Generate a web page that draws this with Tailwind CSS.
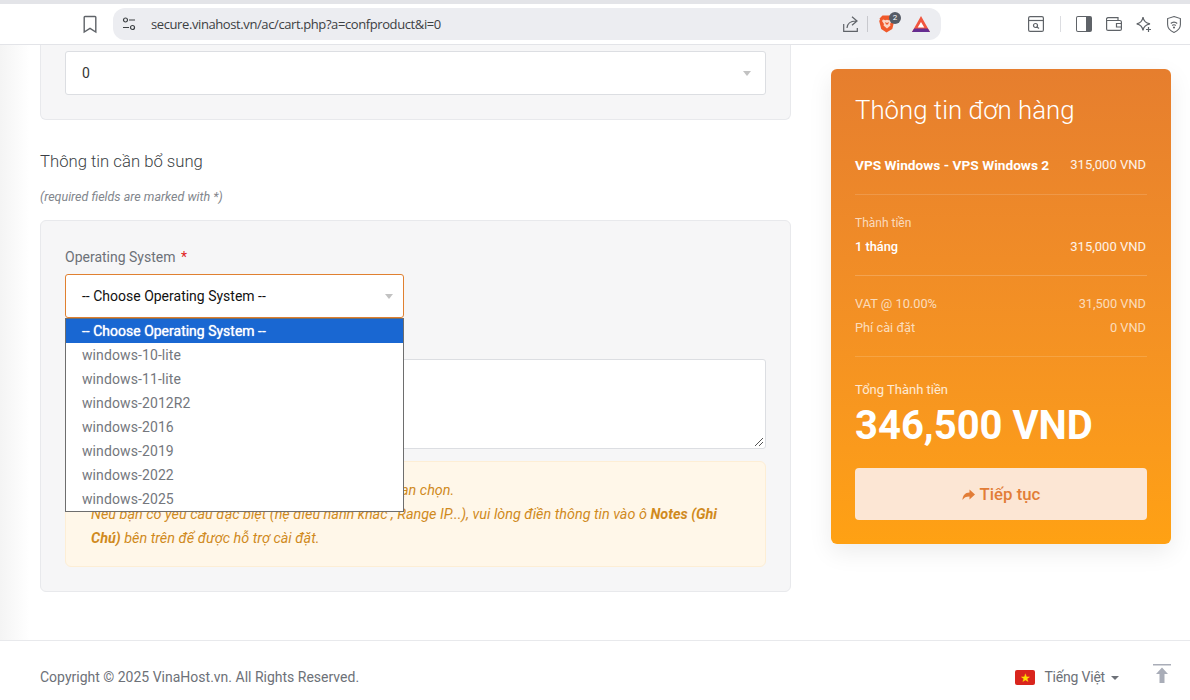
<!DOCTYPE html>
<html lang="en">

<head>
  <script src="https://cdn.jsdelivr.net/npm/@tailwindcss/browser@4"></script>
  <meta charset="UTF-8">
  <title>VinaHost cart</title>
</head>

<body class="h-[700px] w-[1190px] overflow-hidden bg-white font-['Roboto',sans-serif] text-[14px]">
  <!-- Browser toolbar -->
  <div class="h-[45px] border-t-4 border-b border-t-[#e3e4e8] border-b-[#e3e4e8] bg-white flex items-center">
    <svg class="ml-[82px] w-[16px] h-[20px] text-[#5f6368]" viewBox="0 0 16 20" fill="none" stroke="currentColor" stroke-width="1.4">
      <path d="M3 2.500h10a.8.8 0 0 1 .8.8V18l-5.800-3.600L2.200 18V3.300a.8.8 0 0 1 .8-.8z" />
    </svg>
    <div class="ml-[15px] w-[828px] h-[32px] rounded-[12px] bg-[#ecedf1] flex items-center">
      <svg class="ml-[9px] w-[14px] h-[14px] text-[#3c4043]" viewBox="0 0 14 14" fill="none" stroke="currentColor" stroke-width="1.2">
        <circle cx="3.500" cy="3" r="2" />
        <path d="M7 3h6M1 10.500h6" />
        <circle cx="10.500" cy="10.500" r="2" />
      </svg>
      <span class="ml-[15px] pt-[2px] text-[13px] text-[#3c4043] font-['Open_Sans',sans-serif] tracking-[-0.4px]">secure.vinahost.vn/ac/cart.php?a=confproduct&amp;i=0</span>
      <svg class="ml-auto w-[16px] h-[16px] text-[#5f6368]" viewBox="0 0 16 16" fill="none" stroke="currentColor" stroke-width="1.2">
        <path d="M.7 8v7.300h13.600V12M4 12c.4-4.500 3.500-7 8.800-7M9 .8l5 4.200-5 4.200" />
      </svg>
      <div class="ml-[8px] w-px h-[16px] bg-[#c8c9ce]"></div>
      <div class="relative ml-[11px] w-[16px] h-[18px]">
        <svg class="w-[16px] h-[18px]" viewBox="0 0 16 18">
          <path d="M3.500 .5h9l2.500 3-.5 1 .8 1.500-2 8-5.800 3.500L2.200 14l-2-8L1 4.500l-.5-1z" fill="#f0592a" />
          <path d="M4 4.500l2.500.8L8 4.800l1.500.5 2.500-.8 1 1.500-2 3 .5 1.500L8 13.500 4.500 10.500l.5-1.500-2-3z" fill="#fbd6c5" />
          <path d="M6 7l2 1 2-1-1 2.500H7z" fill="#f0592a" />
        </svg>
        <span class="absolute -top-[3px] left-[10px] w-[12px] h-[12px] rounded-full bg-[#555b66] text-white text-[8px] leading-[12px] text-center">2</span>
      </div>
      <svg class="ml-[17px] mr-[11px] w-[18px] h-[16px]" viewBox="0 0 18 16">
        <path d="M9 0l9 16H0z" fill="#f1563f" />
        <path d="M0 16l2.200-3.500h13.600L18 16z" fill="#662d91" />
        <path d="M9 6l3.300 5.500H5.700z" fill="#fff" />
      </svg>
    </div>
    <svg class="ml-[87px] w-[16px] h-[16px] text-[#5f6368]" viewBox="0 0 16 16" fill="none" stroke="currentColor" stroke-width="1.2">
      <rect x=".6" y=".6" width="14.800" height="14.800" rx="1.500" />
      <path d="M.6 4.500h14.800" />
      <circle cx="7.500" cy="9.500" r="2" />
      <path d="M9 11l2 1.500" />
    </svg>
    <div class="ml-[16px] w-px h-[16px] bg-[#dcdde1]"></div>
    <div class="ml-[15px] w-[16px] h-[16px] rounded-[2px] border-[1.5px] border-[#5f6368] border-r-[6px]"></div>
    <svg class="ml-[14px] w-[16px] h-[14px] text-[#5f6368]" viewBox="0 0 16 14" fill="none" stroke="currentColor" stroke-width="1.2">
      <path d="M.6 3.500v8.400A1.500 1.500 0 0 0 2.100 13.400h11.800a1.500 1.500 0 0 0 1.500-1.500V5a1.500 1.500 0 0 0-1.500-1.500H.6zm0 0a2 2 0 0 1 2-2.900h9.400v2.900" />
      <path d="M15.400 6.500h-4.900v3.500h4.900" />
    </svg>
    <svg class="ml-[14px] w-[16px] h-[16px] text-[#5f6368]" viewBox="0 0 16 16" fill="none" stroke="currentColor" stroke-width="1.2">
      <path d="M7 1c.5 4 2.500 6 7 6.800-4.500.8-6.500 2.700-7 6.700-.5-4-2.500-5.900-6.300-6.700C4.500 7 6.500 5 7 1z" />
      <path d="M12.500 11v5M10 13.500h5" />
    </svg>
    <svg class="ml-[15px] w-[14px] h-[17px] text-[#5f6368]" viewBox="0 0 14 17" fill="none" stroke="currentColor" stroke-width="1.1">
      <path d="M7 .6l6.400 2v6c0 4-3 6.500-6.400 7.800C3.600 15.100.6 12.600.6 8.600v-6z" />
      <path d="M3.800 7.500a4.500 4.500 0 0 1 6.400 0M5.200 9.500a2.500 2.500 0 0 1 3.600 0" />
      <circle cx="7" cy="11.500" r=".5" />
    </svg>
  </div>

  <!-- Page -->
  <div class="h-[655px] flex flex-col bg-gradient-to-r from-[#f4f4f4] via-white via-[2.500%] to-white">
    <div class="h-[595px] flex items-start pl-10 overflow-hidden">
      <!-- Left column -->
      <div class="w-[751px] shrink-0">
        <div class="h-[75px] border border-t-0 border-[#e8e9ec] rounded-b-[6px] bg-[#f6f6f7] px-6 pt-[6px]">
          <div class="h-[44px] rounded-[3px] border border-[#dcdee2] bg-white flex items-center justify-between pl-4 pr-[14px] text-[#333]">
            <span>0</span>
            <span class="w-0 h-0 border-x-[4px] border-x-transparent border-t-[5px] border-t-[#c2c2c2]"></span>
          </div>
        </div>
        <h3 class="mt-[32px] text-[16.7px] leading-[20px] font-light text-[#3b3f45]">Thông tin cần bổ sung</h3>
        <p class="mt-[16px] text-[12.5px] leading-[18px] italic text-[#82868c]">(required fields are marked with *)</p>
        <div class="mt-[14px] h-[372px] rounded-[6px] border border-[#e8e9ec] bg-[#f6f6f7] px-6 pt-[25px]">
          <div class="text-[14px] leading-[22px] text-[#6d7178]">Operating System <span class="ml-[2px] text-[#e11d1d]">*</span></div>
          <div class="relative mt-[6px] w-[339px]">
            <div class="h-[44px] rounded-[3px] border border-[#e08030] bg-white flex items-center justify-between pl-4 pr-[10px] text-[#111]">
              <span>-- Choose Operating System --</span>
              <span class="w-0 h-0 border-x-[4px] border-x-transparent border-t-[5px] border-t-[#c2c2c2]"></span>
            </div>
            <!-- Open select list -->
            <ul class="absolute z-10 top-[44px] left-0 w-[339px] h-[194px] border border-[#6e6e6e] bg-white text-[#74777d] leading-[24px] tracking-[0.1px]">
              <li class="h-[24px] pl-4 bg-[#1967d2] text-white tracking-normal [text-shadow:0_0_1px_#fff]">-- Choose Operating System --</li>
              <li class="h-[24px] pl-4">windows-10-lite</li>
              <li class="h-[24px] pl-4">windows-11-lite</li>
              <li class="h-[24px] pl-4">windows-2012R2</li>
              <li class="h-[24px] pl-4">windows-2016</li>
              <li class="h-[24px] pl-4">windows-2019</li>
              <li class="h-[24px] pl-4">windows-2022</li>
              <li class="h-[24px] pl-4">windows-2025</li>
            </ul>
          </div>
          <div class="relative mt-[41px] h-[90px] rounded-[3px] border border-[#dcdee2] bg-white">
            <svg class="absolute right-[1px] bottom-[1px] w-[10px] h-[10px] text-[#555]" viewBox="0 0 10 10" fill="none" stroke="currentColor">
              <path d="M1 9l8-8M5 9l4-4" />
            </svg>
          </div>
          <div class="mt-3 h-[106px] rounded-[6px] border border-[#fdeed5] bg-[#fff7e9] px-[25px] pt-[17px] text-[14.4px] leading-[24px] italic text-[#d08a1d]">
            <p>VPS sẽ được cài đặt theo đúng hệ điều hành mà bạn chọn.</p>
            <p>Nếu bạn có yêu cầu đặc biệt (hệ điều hành khác , Range IP...), vui lòng điền thông tin vào ô <b>Notes (Ghi Chú)</b> bên trên để được hỗ trợ cài đặt.</p>
          </div>
        </div>
      </div>
      <!-- Order summary -->
      <div class="ml-10 mt-[24px] w-[340px] h-[475px] shrink-0 rounded-[6px] bg-gradient-to-b from-[#e67e2e] to-[#ffa113] px-6 pt-[22px] text-white shadow-[0_8px_24px_rgba(0,0,0,0.08)]">
        <h2 class="text-[25.8px] leading-[38px] font-light">Thông tin đơn hàng</h2>
        <div class="mt-[26px] pr-px flex justify-between text-[13px] leading-[20px]">
          <span class="font-bold text-[13.7px]">VPS Windows - VPS Windows 2</span>
          <span class="text-white/90">315,000 VND</span>
        </div>
        <div class="mt-[19px] border-t border-white/15"></div>
        <div class="mt-[18px] text-[12px] leading-[20px] text-white/70">Thành tiền</div>
        <div class="mt-[4px] pr-px flex justify-between text-[12.8px] leading-[20px] font-medium">
          <span>1 tháng</span>
          <span class="font-normal text-[13px] text-white/90">315,000 VND</span>
        </div>
        <div class="mt-[18px] border-t border-white/20"></div>
        <div class="mt-[18px] pr-px flex justify-between text-[12.8px] leading-[20px] text-white/70">
          <span>VAT @ 10.00%</span>
          <span>31,500 VND</span>
        </div>
        <div class="mt-[4px] pr-px flex justify-between text-[12.8px] leading-[20px] text-white/70">
          <span>Phí cài đặt</span>
          <span>0 VND</span>
        </div>
        <div class="mt-[18px] border-t border-white/15"></div>
        <div class="mt-[23px] text-[13px] leading-[20px] text-white/80">Tổng Thành tiền</div>
        <div class="mt-[4px] text-[40px] leading-[44px] font-bold">346,500 VND</div>
        <div class="mt-[20px] h-[52px] pt-px rounded-[4px] bg-[#fce6d4] flex items-center justify-center gap-[5px] text-[16.8px] font-medium text-[#e27d37]">
          <svg class="w-[13px] h-[12px]" viewBox="0 0 13 12" fill="currentColor">
            <path d="M7.500 .5L13 5.500 7.500 10.500V7.500C4 7.500 2 8.500 .5 11 .5 7 3 3.500 7.500 3.500z" />
          </svg>
          <span>Tiếp tục</span>
        </div>
      </div>
    </div>
    <!-- Footer -->
    <footer class="h-[60px] border-t border-[#e8e9ec] bg-white flex items-center pl-10 pr-[19px] pt-[14px] text-[#6d7178]">
      <span>Copyright © 2025 VinaHost.vn. All Rights Reserved.</span>
      <span class="ml-auto w-[20px] h-[15px] rounded-[2px] bg-[#d9251d] flex items-center justify-center text-[#ffdd00] text-[12px] leading-none">★</span>
      <span class="ml-[9px] tracking-[-0.2px]">Tiếng Việt</span>
      <span class="ml-[6px] w-0 h-0 border-x-[4px] border-x-transparent border-t-[4px] border-t-[#6d7178]"></span>
      <svg class="ml-[34px] w-[18px] h-[20px] mb-[7px] text-[#a9adb8]" viewBox="0 0 18 20" fill="currentColor">
        <path d="M0 0h18v1.500H0zM9 3.500l6 6.500h-3.500v9h-5v-9H3z" />
      </svg>
    </footer>
  </div>
</body>

</html>
